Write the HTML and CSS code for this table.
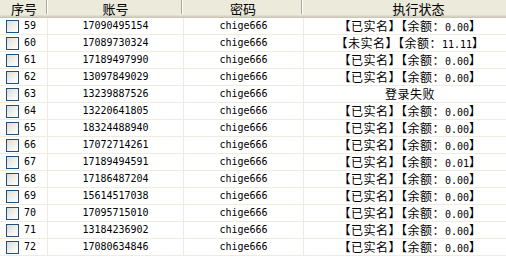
FILE: index.html
```html
<!DOCTYPE html>
<html lang="zh">
<head>
<meta charset="utf-8">
<link rel="stylesheet" href="styles.css">
</head>
<body>
<div class="grid">
  <div class="head">
    <div class="hc c1">序号</div>
    <div class="hc c2">账号</div>
    <div class="hc c3">密码</div>
    <div class="hc c4">执行状态</div>
  </div>
  <div class="row"><div class="cell c1"><span class="cb"></span><span class="num">59</span></div><div class="cell c2 num">17090495154</div><div class="cell c3 num">chige666</div><div class="cell c4">【已实名】【余额：<span class="num">0.00</span>】</div></div>
  <div class="row"><div class="cell c1"><span class="cb"></span><span class="num">60</span></div><div class="cell c2 num">17089730324</div><div class="cell c3 num">chige666</div><div class="cell c4">【未实名】【余额：<span class="num">11.11</span>】</div></div>
  <div class="row"><div class="cell c1"><span class="cb"></span><span class="num">61</span></div><div class="cell c2 num">17189497990</div><div class="cell c3 num">chige666</div><div class="cell c4">【已实名】【余额：<span class="num">0.00</span>】</div></div>
  <div class="row"><div class="cell c1"><span class="cb"></span><span class="num">62</span></div><div class="cell c2 num">13097849029</div><div class="cell c3 num">chige666</div><div class="cell c4">【已实名】【余额：<span class="num">0.00</span>】</div></div>
  <div class="row"><div class="cell c1"><span class="cb"></span><span class="num">63</span></div><div class="cell c2 num">13239887526</div><div class="cell c3 num">chige666</div><div class="cell c4">登录失败</div></div>
  <div class="row"><div class="cell c1"><span class="cb"></span><span class="num">64</span></div><div class="cell c2 num">13220641805</div><div class="cell c3 num">chige666</div><div class="cell c4">【已实名】【余额：<span class="num">0.00</span>】</div></div>
  <div class="row"><div class="cell c1"><span class="cb"></span><span class="num">65</span></div><div class="cell c2 num">18324488940</div><div class="cell c3 num">chige666</div><div class="cell c4">【已实名】【余额：<span class="num">0.00</span>】</div></div>
  <div class="row"><div class="cell c1"><span class="cb"></span><span class="num">66</span></div><div class="cell c2 num">17072714261</div><div class="cell c3 num">chige666</div><div class="cell c4">【已实名】【余额：<span class="num">0.00</span>】</div></div>
  <div class="row"><div class="cell c1"><span class="cb"></span><span class="num">67</span></div><div class="cell c2 num">17189494591</div><div class="cell c3 num">chige666</div><div class="cell c4">【已实名】【余额：<span class="num">0.01</span>】</div></div>
  <div class="row"><div class="cell c1"><span class="cb"></span><span class="num">68</span></div><div class="cell c2 num">17186487204</div><div class="cell c3 num">chige666</div><div class="cell c4">【已实名】【余额：<span class="num">0.00</span>】</div></div>
  <div class="row"><div class="cell c1"><span class="cb"></span><span class="num">69</span></div><div class="cell c2 num">15614517038</div><div class="cell c3 num">chige666</div><div class="cell c4">【已实名】【余额：<span class="num">0.00</span>】</div></div>
  <div class="row"><div class="cell c1"><span class="cb"></span><span class="num">70</span></div><div class="cell c2 num">17095715010</div><div class="cell c3 num">chige666</div><div class="cell c4">【已实名】【余额：<span class="num">0.00</span>】</div></div>
  <div class="row"><div class="cell c1"><span class="cb"></span><span class="num">71</span></div><div class="cell c2 num">13184236902</div><div class="cell c3 num">chige666</div><div class="cell c4">【已实名】【余额：<span class="num">0.00</span>】</div></div>
  <div class="row"><div class="cell c1"><span class="cb"></span><span class="num">72</span></div><div class="cell c2 num">17080634846</div><div class="cell c3 num">chige666</div><div class="cell c4">【已实名】【余额：<span class="num">0.00</span>】</div></div>
</div>
</body>
</html>
```
FILE: styles.css
```css
html, body {
  margin: 0;
  padding: 0;
  background: #ffffff;
  overflow: hidden;
}
.grid {
  width: 516px;
  font-family: "Noto Sans CJK SC", "Liberation Sans", sans-serif;
  font-size: 12px;
  color: #000;
}
.head {
  display: flex;
  height: 18px;
  background: linear-gradient(to bottom,
    #ebeadb 0, #ebeadb 15px,
    #e2decd 15px, #e2decd 16px,
    #d6d2c2 16px, #d6d2c2 17px,
    #cbc7b8 17px, #cbc7b8 18px);
}
.hc {
  font-size: 13px;
  line-height: 17px;
  height: 18px;
  text-align: center;
  box-sizing: border-box;
  background:
    linear-gradient(#aca899, #aca899) right 1px top 0 / 1px 14px no-repeat,
    linear-gradient(#ffffff, #ffffff) right 0 top 0 / 1px 14px no-repeat;
}
.head .c1 { width: 48px; }
.head .c2 { width: 135px; }
.head .c3 { width: 120px; }
.head .c4 { flex: 1; background: none; padding-left: 18px; }
.row {
  display: flex;
  height: 16px;
  border-bottom: 1px solid #efebde;
}
.cell {
  box-sizing: border-box;
  height: 16px;
  line-height: 16px;
  border-right: 1px solid #efebde;
  text-align: center;
  white-space: nowrap;
}
.row .c1 {
  width: 48px;
  display: flex;
  align-items: center;
  text-align: left;
  padding-left: 6px;
  gap: 5px;
}
.row .c2 { width: 136px; }
.row .c3 { width: 120px; }
.row .c4 { flex: 1; border-right: none; letter-spacing: 0.5px; }
.cb {
  display: block;
  width: 13px;
  height: 13px;
  box-sizing: border-box;
  border: 1px solid #1c5180;
  background: linear-gradient(135deg, #dcdbd3 0%, #f4f3ee 60%, #ffffff 100%);
  margin-top: 1px;
}
.num {
  font-family: "DejaVu Sans Mono", "Liberation Mono", monospace;
  font-size: 10px;
  letter-spacing: 0;
}
```
